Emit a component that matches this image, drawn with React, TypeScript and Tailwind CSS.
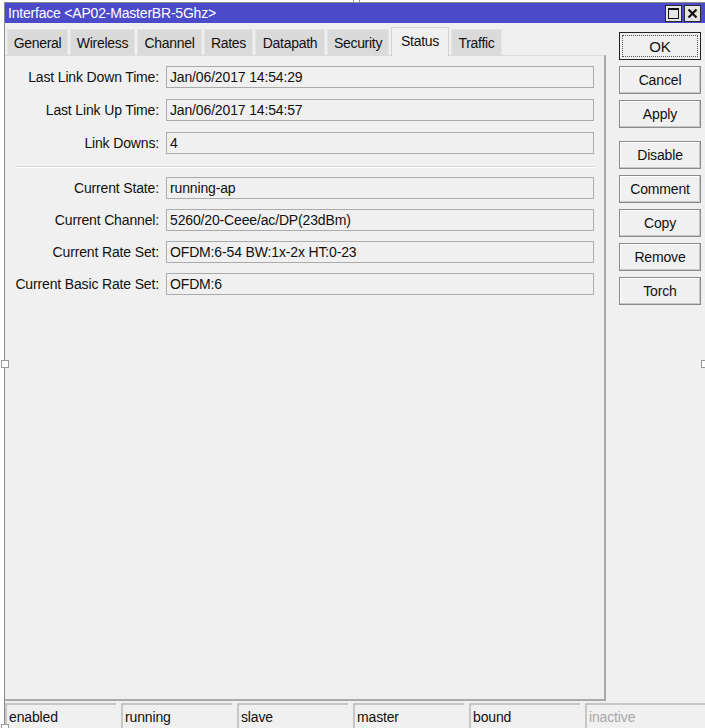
import React from 'react';

const tabs = [
  { name: 'General', w: 'w-[61px]' },
  { name: 'Wireless', w: 'w-[65px]' },
  { name: 'Channel', w: 'w-[65px]' },
  { name: 'Rates', w: 'w-[49px]' },
  { name: 'Datapath', w: 'w-[70px]' },
  { name: 'Security', w: 'w-[62px]' },
  { name: 'Status', w: 'w-[58px]', active: true },
  { name: 'Traffic', w: 'w-[51px]' },
];

const linkRows = [
  ['Last Link Down Time:', 'Jan/06/2017 14:54:29'],
  ['Last Link Up Time:', 'Jan/06/2017 14:54:57'],
  ['Link Downs:', '4'],
];

const stateRows = [
  ['Current State:', 'running-ap'],
  ['Current Channel:', '5260/20-Ceee/ac/DP(23dBm)'],
  ['Current Rate Set:', 'OFDM:6-54 BW:1x-2x HT:0-23'],
  ['Current Basic Rate Set:', 'OFDM:6'],
];

const statusCells = ['enabled', 'running', 'slave', 'master', 'bound'];

function Field({ label, value }: { label: string; value: string }) {
  return (
    <div className="flex items-center h-[22px]">
      <span className="w-[155px] text-right pr-px whitespace-nowrap text-[#111]">{label}</span>
      <div className="ml-[6px] w-[428px] h-[22px] border border-[#ababab] bg-[#f0f0f0] flex items-center pl-[3px] text-[#111] whitespace-nowrap">
        {value}
      </div>
    </div>
  );
}

function Btn({ label, focused }: { label: string; focused?: boolean }) {
  if (focused) {
    return (
      <div className="w-[82px] h-[28px] border border-[#222] bg-[#f0f0f0] p-[2px]">
        <div className="w-full h-full border border-dotted border-[#555] flex items-center justify-center text-[15px] text-[#111]">
          {label}
        </div>
      </div>
    );
  }
  return (
    <div className="w-[82px] h-[28px] border border-[#8a8a8a] bg-[#f0f0f0] shadow-[inset_-1px_-1px_0_#c8c8c8,inset_1px_1px_0_#ffffff] flex items-center justify-center text-[#111]">
      {label}
    </div>
  );
}

export default function App() {
  return (
    <div
      className="relative w-[705px] h-[728px] bg-white pt-[2px] pl-[4px] overflow-hidden text-[14px] tracking-[-0.15px] leading-none"
      style={{ fontFamily: '"Liberation Sans", Arial, sans-serif' }}
    >
      <div className="h-full border-t border-l border-[#8c8c8c] bg-[#f0f0f0] flex flex-col">
        {/* Title bar */}
        <div className="h-[20px] bg-[#4b4bca] flex items-center justify-between pl-[3px] pr-[4px]">
          <span className="text-white text-[14px] tracking-[-0.2px] whitespace-nowrap">Interface &lt;AP02-MasterBR-5Ghz&gt;</span>
          <div className="flex items-center gap-[2px]">
            <div className="w-[17px] h-[17px] bg-[#e6e6e6] border border-[#2a2a2a] flex items-center justify-center">
              <svg width="11" height="11" viewBox="0 0 11 11">
                <rect x="0.5" y="0.5" width="10" height="10" fill="none" stroke="#111" strokeWidth="1" />
                <rect x="0" y="0" width="11" height="2" fill="#111" />
              </svg>
            </div>
            <div className="w-[17px] h-[17px] bg-[#e6e6e6] border border-[#2a2a2a] flex items-center justify-center">
              <svg width="11" height="11" viewBox="0 0 11 11">
                <path d="M1.5 1.5L9.5 9.5M9.5 1.5L1.5 9.5" stroke="#111" strokeWidth="2.2" />
              </svg>
            </div>
          </div>
        </div>

        <div className="flex flex-1 min-h-0">
          {/* Left: tabs + panel */}
          <div className="w-[601px] flex flex-col">
            <div className="flex items-end h-[32px] pl-[2px] gap-[2px] tracking-[-0.3px]">
              {tabs.map(t =>
                t.active ? (
                  <div
                    key={t.name}
                    className={`${t.w} h-[29px] -mb-px bg-[#f0f0f0] border border-b-0 border-[#d2d2d2] flex items-center justify-center text-[#111] pb-[3px] relative z-10`}
                  >
                    {t.name}
                  </div>
                ) : (
                  <div
                    key={t.name}
                    className={`${t.w} h-[26px] bg-[#dadada] border border-b-0 border-[#e4e4e4] flex items-center justify-center text-[#111]`}
                  >
                    {t.name}
                  </div>
                )
              )}
            </div>
            <div className="h-[646px] border-t border-[#dcdcdc] border-r-2 border-r-[#a9a9a9] border-b-2 border-b-[#a9a9a9] pt-[10px] flex flex-col">
              <div className="flex flex-col gap-[11px]">
                {linkRows.map(([l, v]) => (
                  <Field key={l} label={l} value={v} />
                ))}
              </div>
              <div className="ml-[10px] mt-[12px] w-[579px] h-[2px] border-t border-[#d4d4d4] border-b border-b-white" />
              <div className="mt-[9px] flex flex-col gap-[10px]">
                {stateRows.map(([l, v]) => (
                  <Field key={l} label={l} value={v} />
                ))}
              </div>
            </div>
          </div>

          {/* Right: buttons */}
          <div className="ml-[13px] pt-[9px] flex flex-col gap-[6px]">
            <Btn label="OK" focused />
            <Btn label="Cancel" />
            <Btn label="Apply" />
            <div className="mt-[7px]">
              <Btn label="Disable" />
            </div>
            <Btn label="Comment" />
            <Btn label="Copy" />
            <Btn label="Remove" />
            <Btn label="Torch" />
          </div>
        </div>

        {/* Status bar */}
        <div className="h-[25px] flex gap-[5px] mt-[2px]">
          {statusCells.map(s => (
            <div
              key={s}
              className="w-[111px] border-t-2 border-l-2 border-[#c6c6c6] flex items-center pl-[2px] text-[#111]"
            >
              {s}
            </div>
          ))}
          <div className="flex-1 border-t-2 border-l-2 border-[#c6c6c6] flex items-center pl-[2px] text-[#a8a8a8]">
            inactive
          </div>
        </div>
      </div>

      {/* resize handles */}
      <div className="absolute left-[353px] top-[-4px] w-[7px] h-[7px] bg-white border border-[#999]" />
      <div className="absolute left-[1px] top-[360px] w-[8px] h-[8px] bg-white border border-[#999]" />
      <div className="absolute right-[-4px] top-[360px] w-[8px] h-[8px] bg-white border border-[#999]" />
      <div className="absolute left-[1px] bottom-[-4px] w-[8px] h-[8px] bg-white border border-[#999]" />
    </div>
  );
}
